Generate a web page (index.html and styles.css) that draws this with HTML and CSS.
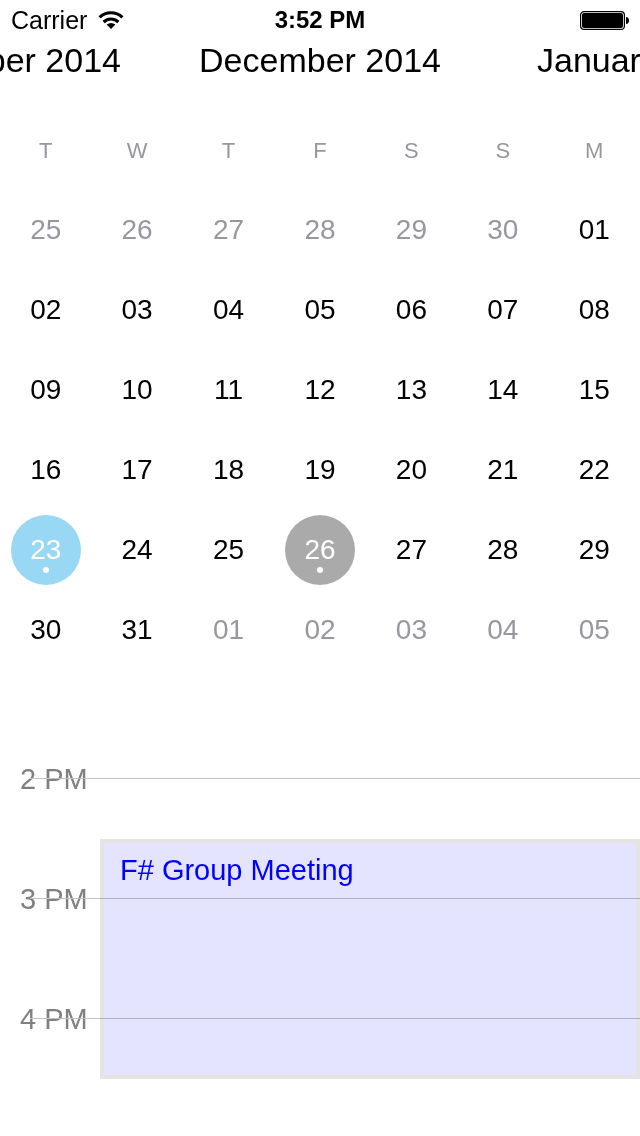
FILE: index.html
```
<!DOCTYPE html>
<html lang="en">
<head>
<meta charset="utf-8">
<meta name="viewport" content="width=device-width, initial-scale=1">
<title>Calendar</title>
<link rel="stylesheet" href="styles.css">
</head>
<body>
<header class="status">
  <div class="carrier">
    <span>Carrier</span>
    <svg class="wifi" viewBox="0 0 26 18" aria-hidden="true">
      <path d="M1.6 6.4C8 .2 18 .2 24.4 6.4M5.6 11C10 7 16 7 20.4 11" fill="none" stroke="#000" stroke-width="3.2"/>
      <path d="M13 18L8.6 13.6Q13 10.2 17.4 13.6Z"/>
    </svg>
  </div>
  <time class="clock">3:52 PM</time>
  <svg class="battery" viewBox="0 0 49 20" aria-hidden="true">
    <rect x=".6" y="1.6" width="43.8" height="17.8" rx="3.5" fill="none" stroke="#000" stroke-width="1.2"/>
    <rect x="2" y="3" width="41" height="15" rx="2"/>
    <path d="M46 7c4 0 4 7 0 7z"/>
  </svg>
</header>
<main class="screen">
  <nav class="months" aria-label="Months">
    <button class="month" type="button">November 2014</button>
    <h1 class="month">December 2014</h1>
    <button class="month" type="button">January 2015</button>
  </nav>
  <table class="calendar">
    <thead>
      <tr><th>T</th><th>W</th><th>T</th><th>F</th><th>S</th><th>S</th><th>M</th></tr>
    </thead>
    <tbody>
      <tr><td><button class="day other">25</button></td><td><button class="day other">26</button></td><td><button class="day other">27</button></td><td><button class="day other">28</button></td><td><button class="day other">29</button></td><td><button class="day other">30</button></td><td><button class="day">01</button></td></tr>
      <tr><td><button class="day">02</button></td><td><button class="day">03</button></td><td><button class="day">04</button></td><td><button class="day">05</button></td><td><button class="day">06</button></td><td><button class="day">07</button></td><td><button class="day">08</button></td></tr>
      <tr><td><button class="day">09</button></td><td><button class="day">10</button></td><td><button class="day">11</button></td><td><button class="day">12</button></td><td><button class="day">13</button></td><td><button class="day">14</button></td><td><button class="day">15</button></td></tr>
      <tr><td><button class="day">16</button></td><td><button class="day">17</button></td><td><button class="day">18</button></td><td><button class="day">19</button></td><td><button class="day">20</button></td><td><button class="day">21</button></td><td><button class="day">22</button></td></tr>
      <tr><td><button class="day marked today">23</button></td><td><button class="day">24</button></td><td><button class="day">25</button></td><td><button class="day marked selected" aria-pressed="true">26</button></td><td><button class="day">27</button></td><td><button class="day">28</button></td><td><button class="day">29</button></td></tr>
      <tr><td><button class="day">30</button></td><td><button class="day">31</button></td><td><button class="day other">01</button></td><td><button class="day other">02</button></td><td><button class="day other">03</button></td><td><button class="day other">04</button></td><td><button class="day other">05</button></td></tr>
    </tbody>
  </table>
  <section class="timeline" aria-label="Schedule">
    <div class="hour hour-2">2 PM</div>
    <div class="hour hour-3">3 PM</div>
    <div class="hour hour-4">4 PM</div>
    <article class="event">F# Group Meeting</article>
  </section>
</main>
</body>
</html>
```
FILE: styles.css
```
* {
  box-sizing: border-box;
}

body {
  margin: 0;
  background: #fff;
  color: #000;
  font-family: "Liberation Sans", Arial, sans-serif;
  font-size: 29px;
}

button {
  padding: 0;
  border: 0;
  background: none;
  color: inherit;
  font: inherit;
}

.status {
  display: grid;
  grid-template-columns: 1fr auto 1fr;
  align-items: center;
  height: 40px;
  padding: 0 11px 0 11px;
  font-size: 24px;
}

.carrier {
  display: flex;
  align-items: center;
  gap: 11px;
  font-size: 25px;
}

.wifi {
  width: 26px;
  height: 18px;
}

.clock {
  font-weight: bold;
}

.battery {
  justify-self: end;
  width: 49px;
  height: 20px;
}

.screen {
  overflow: hidden;
}

.months {
  display: flex;
  height: 70px;
  margin: 0 -25%;
}

.month {
  flex: 1;
  height: 40px;
  margin: 0;
  font-size: 34px;
  font-weight: normal;
  line-height: 40px;
  text-align: center;
  white-space: nowrap;
}

.calendar {
  width: 100%;
  table-layout: fixed;
  border-collapse: collapse;
}

.calendar th,
.calendar td {
  height: 80px;
  padding: 0;
  text-align: center;
  vertical-align: middle;
}

.calendar th {
  padding-top: 2px;
  color: #99969f;
  font-size: 22px;
  font-weight: normal;
}

.day {
  display: block;
  position: relative;
  width: 70px;
  height: 70px;
  margin: 0 auto;
  border-radius: 50%;
  font-size: 28px;
}

.other {
  color: #99969f;
}

.marked {
  color: #fff;
}

.marked::after {
  content: "";
  position: absolute;
  bottom: 12px;
  left: 32px;
  width: 6px;
  height: 6px;
  border-radius: 50%;
  background: #fff;
}

.today {
  background: #99d8f4;
}

.selected {
  background: #aaa;
}

.timeline {
  display: grid;
  grid-template-columns: 100px 1fr;
  grid-template-rows: repeat(6, 60px);
  margin-top: 49px;
}

.hour {
  position: relative;
  grid-column: 1 / -1;
  padding-left: 20px;
  color: #808080;
  line-height: 120px;
}

.hour::after {
  content: "";
  position: absolute;
  top: 59px;
  right: 0;
  left: 30px;
  height: 1px;
  background: #c3c3c5;
}

.hour-2 {
  grid-row: 1 / 3;
}

.hour-3 {
  grid-row: 3 / 5;
}

.hour-4 {
  grid-row: 5 / 7;
}

.event {
  z-index: 1;
  grid-column: 2;
  grid-row: 3 / 7;
  padding: 10px 16px;
  border: 4px solid #e4e4e4;
  background: #e4e4ff;
  color: #00f;
  line-height: 34px;
  mix-blend-mode: multiply;
}
```
